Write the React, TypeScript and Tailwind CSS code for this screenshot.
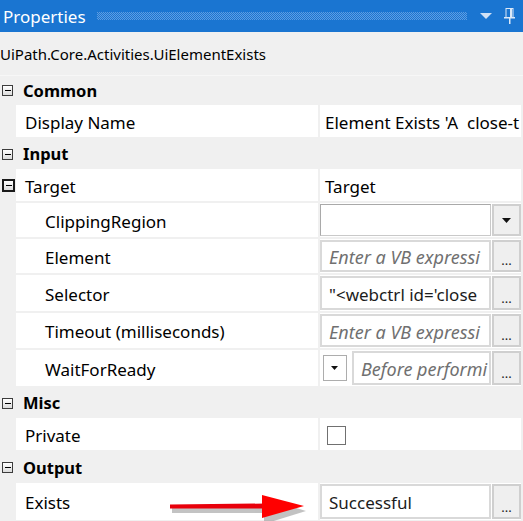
import React from "react";

type Row =
  | { kind: "header"; title: string; h: number }
  | {
      kind: "prop";
      label: string;
      h: number;
      indent?: boolean;
      expander?: boolean;
      value: React.ReactNode;
    };

const MinusBox = ({ bold }: { bold?: boolean }) => (
  <div
    className={`flex items-center justify-center bg-gradient-to-b from-white to-[#dcdcdc] ${
      bold ? "w-[13px] h-[13px] border-2 border-[#1a1a1a]" : "w-[11px] h-[11px] border border-[#3c3c3c]"
    }`}
  >
    <div className="w-[6px] h-[1px] bg-black" />
  </div>
);

const DotsButton = () => (
  <div className="w-[29px] h-full bg-[#efefef] border-2 border-[#cfcfcf] flex items-end justify-center pb-[3px] text-[13px] leading-none text-[#222]">
    ...
  </div>
);

const DropButton = () => (
  <div className="w-[29px] h-full bg-[#efefef] border-2 border-[#cfcfcf] flex items-center justify-center">
    <svg width="9" height="5" viewBox="0 0 9 5">
      <path d="M0 0h9L4.5 5z" fill="#111" />
    </svg>
  </div>
);

const Expr = ({ text, hint, w = "w-[171px]" }: { text: string; hint?: boolean; w?: string }) => (
  <div
    className={`${w} h-full border-2 border-[#d9d9d9] bg-white flex items-center pl-[7px] pt-[3px] overflow-hidden whitespace-nowrap ${
      hint ? "italic text-[#707070] text-[18px]" : "text-[#1c1c1c] text-[17px]"
    }`}
  >
    {text}
  </div>
);

const rows: Row[] = [
  { kind: "header", title: "Common", h: 27 },
  {
    kind: "prop",
    label: "Display Name",
    h: 32,
    value: <span className="pl-[5px] pt-[3px] whitespace-nowrap">Element Exists 'A&nbsp; close-t</span>,
  },
  { kind: "header", title: "Input", h: 28 },
  {
    kind: "prop",
    label: "Target",
    h: 32,
    expander: true,
    value: <span className="pl-[5px] pt-[3px]">Target</span>,
  },
  {
    kind: "prop",
    label: "ClippingRegion",
    h: 34,
    indent: true,
    value: (
      <div className="flex h-full gap-[1px] py-[1px]">
        <div className="w-[171px] h-full bg-white border border-[#a9a9a9] border-r-[#c9c9c9] border-b-[#c9c9c9]" />
        <DropButton />
      </div>
    ),
  },
  {
    kind: "prop",
    label: "Element",
    h: 34,
    indent: true,
    value: (
      <div className="flex h-full gap-[1px] py-[1px]">
        <Expr text="Enter a VB expressi" hint />
        <DotsButton />
      </div>
    ),
  },
  {
    kind: "prop",
    label: "Selector",
    h: 36,
    indent: true,
    value: (
      <div className="flex h-full gap-[1px] py-[1px]">
        <Expr text={"\"<webctrl id='close"} />
        <DotsButton />
      </div>
    ),
  },
  {
    kind: "prop",
    label: "Timeout (milliseconds)",
    h: 35,
    indent: true,
    value: (
      <div className="flex h-full gap-[1px] py-[1px]">
        <Expr text="Enter a VB expressi" hint />
        <DotsButton />
      </div>
    ),
  },
  {
    kind: "prop",
    label: "WaitForReady",
    h: 36,
    indent: true,
    value: (
      <div className="flex h-full items-center gap-[1px] py-[1px]">
        <div className="w-[31px] h-full flex items-center justify-center pr-[2px]">
          <div className="w-[24px] h-[26px] bg-white border border-[#adadad] flex items-center justify-center">
            <svg width="7" height="4" viewBox="0 0 7 4">
              <path d="M0 0h7L3.5 4z" fill="#111" />
            </svg>
          </div>
        </div>
        <Expr text="Before performi" hint w="w-[139px]" />
        <DotsButton />
      </div>
    ),
  },
  { kind: "header", title: "Misc", h: 28 },
  {
    kind: "prop",
    label: "Private",
    h: 32,
    value: <div className="ml-[7px] mt-[2px] w-[19px] h-[19px] border border-[#707070] bg-white" />,
  },
  { kind: "header", title: "Output", h: 29 },
  {
    kind: "prop",
    label: "Exists",
    h: 37,
    value: (
      <div className="flex h-full gap-[1px] py-[1px]">
        <Expr text="Successful" />
        <DotsButton />
      </div>
    ),
  },
];

const TitleBar = () => (
  <div className="h-[32px] bg-[#1a75d1] flex items-center text-white">
    <span className="pl-[3px] text-[17px] leading-none">Properties</span>
    <svg className="ml-[11px]" width="370" height="8" viewBox="0 0 370 8">
      <defs>
        <pattern id="dots" width="2" height="2" patternUnits="userSpaceOnUse">
          <rect width="1" height="1" fill="#5f9de2" />
          <rect x="1" y="1" width="1" height="1" fill="#5f9de2" />
        </pattern>
      </defs>
      <rect width="370" height="8" fill="url(#dots)" />
    </svg>
    <svg className="ml-[13px]" width="12" height="6" viewBox="0 0 12 6">
      <path d="M0 0h12L6 6z" fill="#cfe0f5" />
    </svg>
    <svg className="ml-[12px]" width="11" height="16" viewBox="0 0 11 16">
      <rect x="2" y="0.5" width="7" height="9" fill="none" stroke="#dbe8f7" />
      <rect x="6" y="1" width="2" height="8" fill="#dbe8f7" />
      <rect x="0" y="9" width="11" height="1.5" fill="#dbe8f7" />
      <rect x="5" y="10" width="1.5" height="6" fill="#dbe8f7" />
    </svg>
  </div>
);

export default function App() {
  return (
    <div className="relative w-[523px] h-[521px] overflow-hidden bg-[#f0f0f0] text-black font-['Noto_Sans',sans-serif]">
      <TitleBar />
      <div className="h-[44px] flex items-center pt-[2px] text-[15px] border-b border-[#f7f7f7]">
        UiPath.Core.Activities.UiElementExists
      </div>

      <div className="flex flex-col gap-[2px] text-[17px]">
        {rows.map((r, i) =>
          r.kind === "header" ? (
            <div key={i} className="flex items-center" style={{ height: r.h }}>
              <div className="ml-[2px] pt-[2px]">
                <MinusBox />
              </div>
              <span className="ml-[10px] pt-[3px] font-bold text-[16.5px]">{r.title}</span>
            </div>
          ) : (
            <div key={i} className="flex mr-[2px]" style={{ height: r.h }}>
              <div className="w-[16px] shrink-0 flex items-center pl-[2px]">
                {r.expander && <MinusBox bold />}
              </div>
              <div
                className={`w-[302px] shrink-0 bg-white flex items-center pt-[3px] whitespace-nowrap ${
                  r.indent ? "pl-[29px]" : "pl-[9px]"
                }`}
              >
                {r.label}
              </div>
              <div className="ml-[2px] flex-1 bg-white flex items-center overflow-hidden">{r.value}</div>
            </div>
          )
        )}
      </div>

      {/* red arrow pointing at the Exists value */}
      <svg className="absolute left-[166px] top-[492px]" width="145" height="30" viewBox="0 0 145 30">
        <g fill="#7a7a7a" opacity="0.45">
          <path d="M6 15h98v6H6z" />
          <path d="M98 6l42 13-42 13z" />
        </g>
        <path d="M4 12.5l96-1v5l-96 0z" fill="#e8000b" />
        <path d="M96 3l42 11-42 12z" fill="#ff0000" />
      </svg>
    </div>
  );
}
